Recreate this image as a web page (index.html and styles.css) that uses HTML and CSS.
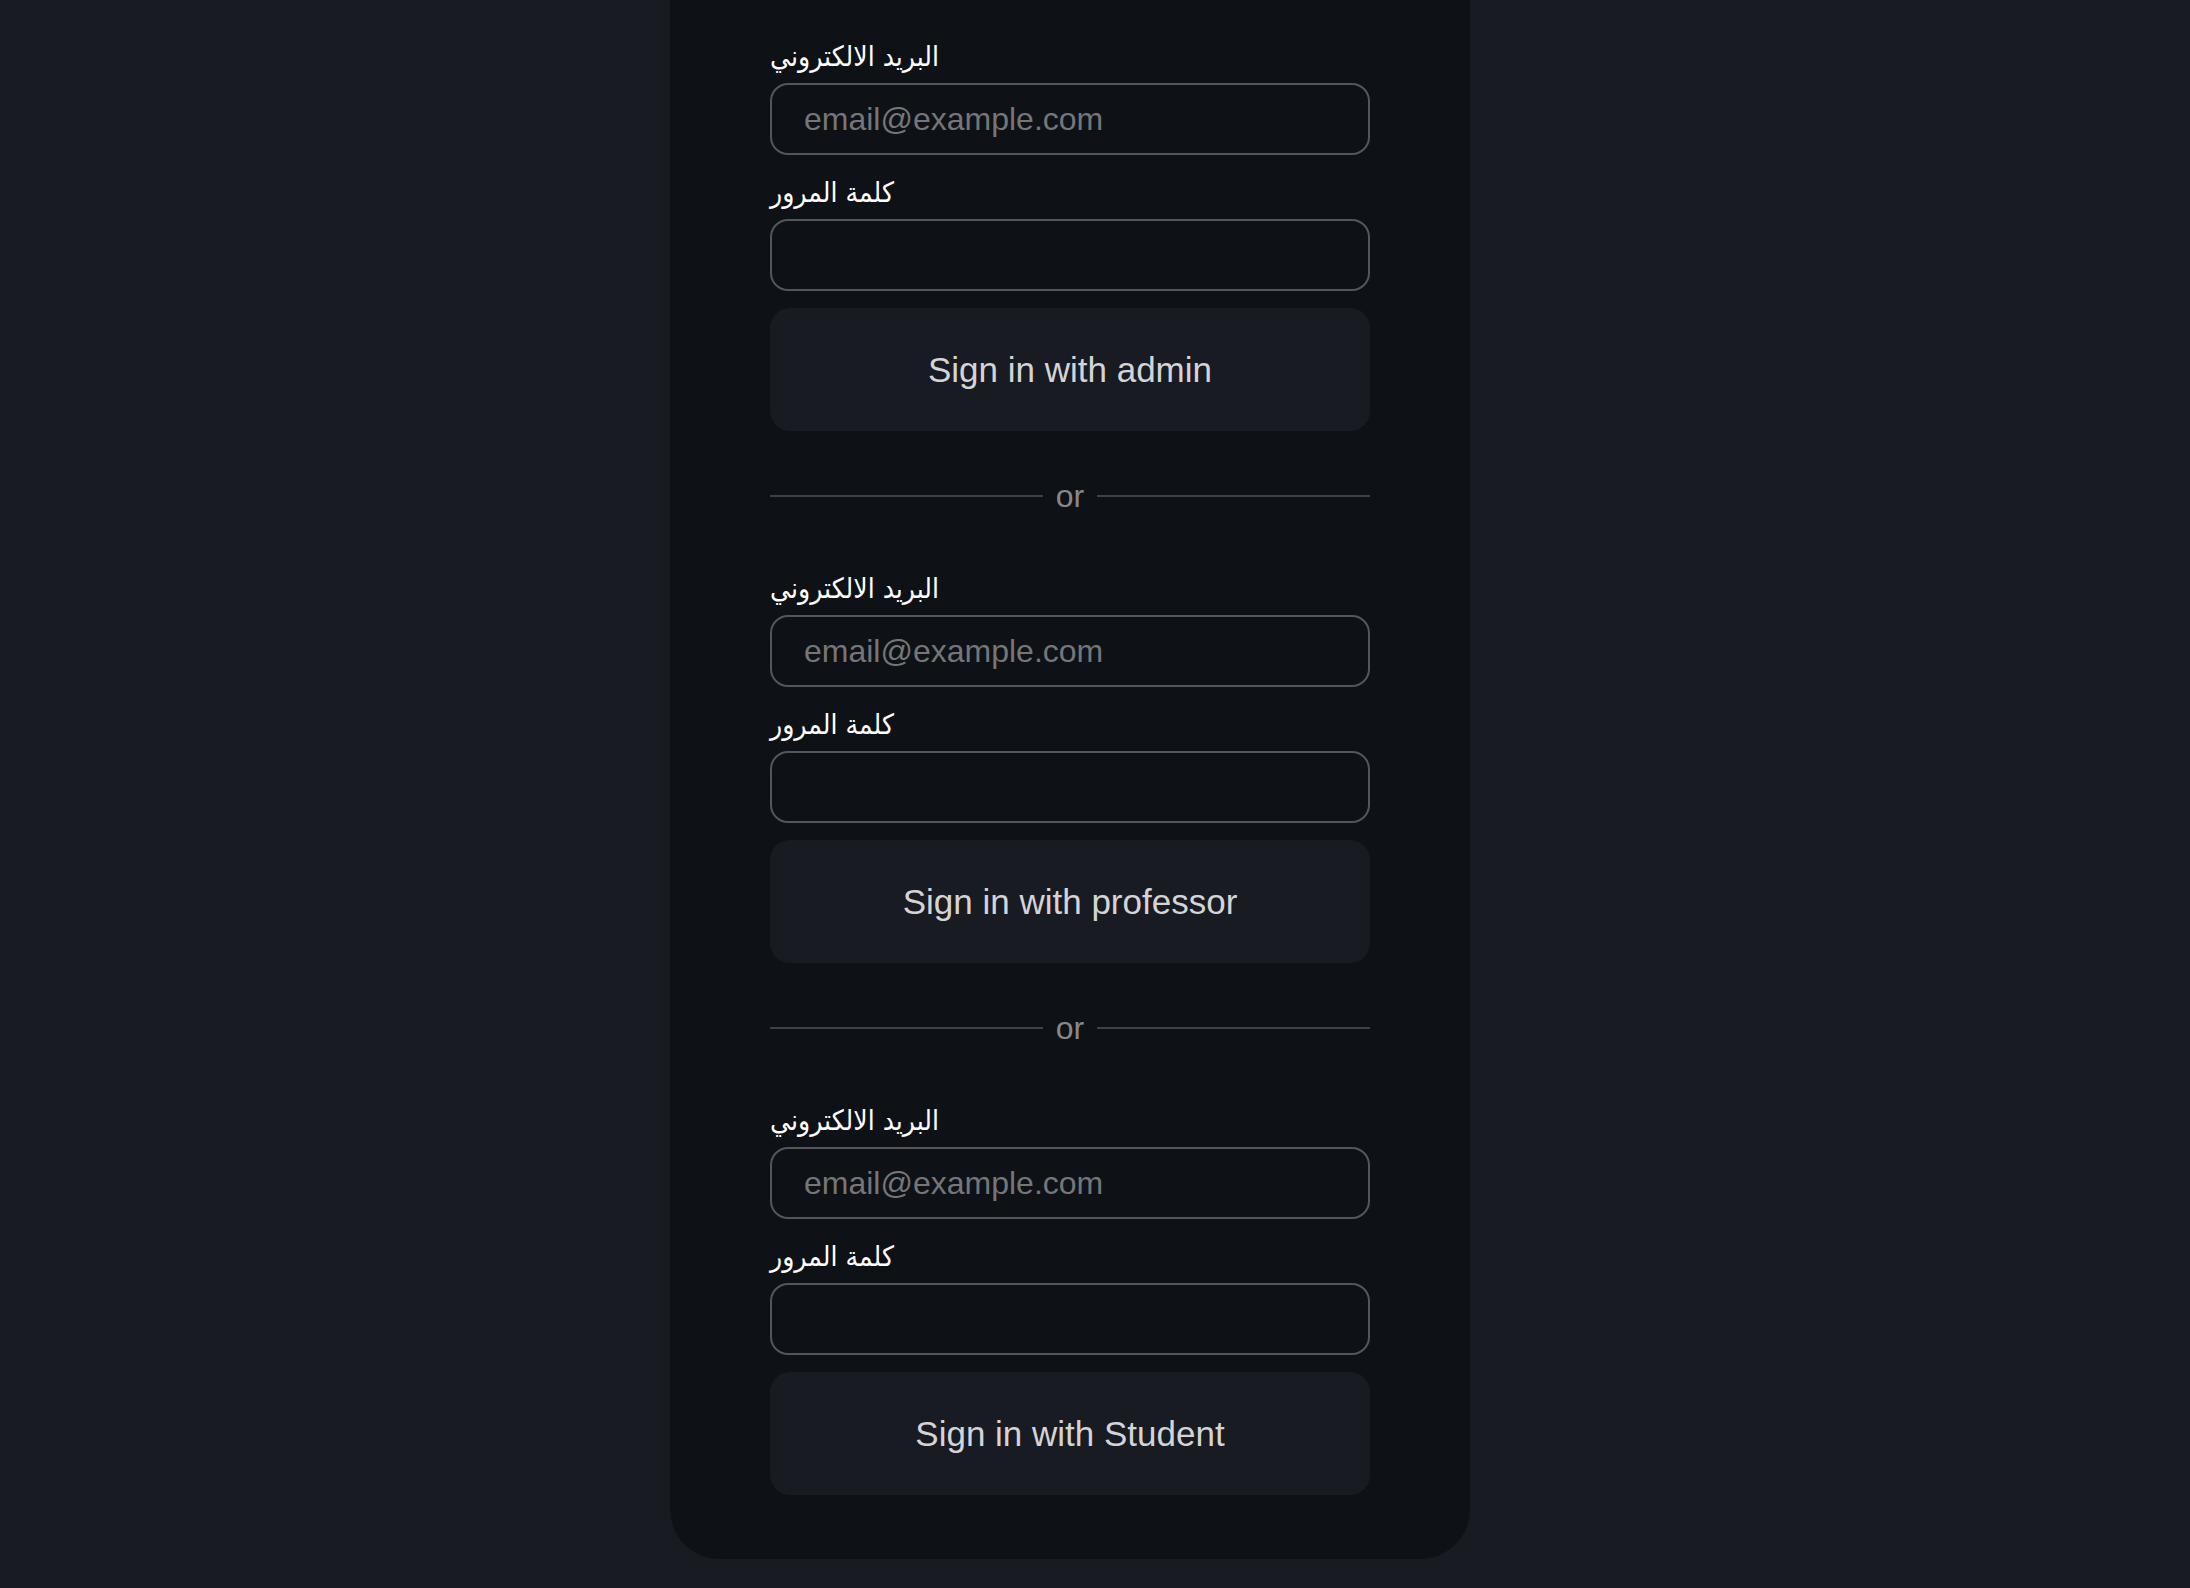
FILE: index.html
```html
<!DOCTYPE html>
<html lang="ar">
<head>
<meta charset="utf-8">
<title>Sign in</title>
<link rel="stylesheet" href="styles.css">
</head>
<body>
<div class="page">
  <div class="card">
    <form class="section">
      <div class="field">
        <label class="label">البريد الالكتروني</label>
        <input class="input" type="email" placeholder="email@example.com">
      </div>
      <div class="field field-next">
        <label class="label">كلمة المرور</label>
        <input class="input" type="password">
      </div>
      <button class="btn" type="button">Sign in with admin</button>
    </form>
    <div class="divider"><span class="line"></span><span class="or">or</span><span class="line"></span></div>
    <form class="section">
      <div class="field">
        <label class="label">البريد الالكتروني</label>
        <input class="input" type="email" placeholder="email@example.com">
      </div>
      <div class="field field-next">
        <label class="label">كلمة المرور</label>
        <input class="input" type="password">
      </div>
      <button class="btn" type="button">Sign in with professor</button>
    </form>
    <div class="divider"><span class="line"></span><span class="or">or</span><span class="line"></span></div>
    <form class="section">
      <div class="field">
        <label class="label">البريد الالكتروني</label>
        <input class="input" type="email" placeholder="email@example.com">
      </div>
      <div class="field field-next">
        <label class="label">كلمة المرور</label>
        <input class="input" type="password">
      </div>
      <button class="btn" type="button">Sign in with Student</button>
    </form>
  </div>
</div>
</body>
</html>
```

FILE: styles.css
```css
html, body {
  margin: 0;
  padding: 0;
  background: #181b22;
  height: 100%;
}
body {
  font-family: "Liberation Sans", "DejaVu Sans", sans-serif;
  overflow: hidden;
}
.page {
  display: flex;
  justify-content: center;
  padding-right: 50px;
}
.card {
  width: 600px;
  margin-top: -60px;
  padding: 99px 100px 64px;
  background: #0e1116;
  border-radius: 50px;
  display: flex;
  flex-direction: column;
}
.section {
  display: flex;
  flex-direction: column;
  margin: 0;
}
.field {
  display: flex;
  flex-direction: column;
  gap: 8px;
}
.field-next {
  margin-top: 20px;
}
.label {
  font-family: "DejaVu Sans Condensed", "DejaVu Sans", sans-serif;
  font-stretch: condensed;
  font-size: 28px;
  line-height: 36px;
  height: 36px;
  color: #ffffff;
  direction: rtl;
  text-align: left;
  align-self: flex-start;
}
.input {
  box-sizing: border-box;
  height: 72px;
  width: 100%;
  background: transparent;
  border: 2px solid #555659;
  border-radius: 18px;
  padding: 0 32px;
  font-family: "Liberation Sans", sans-serif;
  font-size: 32px;
  color: #e0e0e0;
  outline: none;
}
.input::placeholder {
  color: #757678;
}
.btn {
  margin-top: 17px;
  height: 123px;
  width: 100%;
  border: none;
  border-radius: 20px;
  background: #181b22;
  color: #d4d4d6;
  font-family: "Liberation Sans", sans-serif;
  font-size: 35px;
  cursor: pointer;
}
.divider {
  display: flex;
  align-items: center;
  height: 40px;
  margin: 45px 0 55px;
  gap: 13px;
}
.line {
  flex: 1;
  height: 2px;
  background: #3f4145;
}
.or {
  font-size: 32px;
  line-height: 40px;
  color: #87888b;
}
```
